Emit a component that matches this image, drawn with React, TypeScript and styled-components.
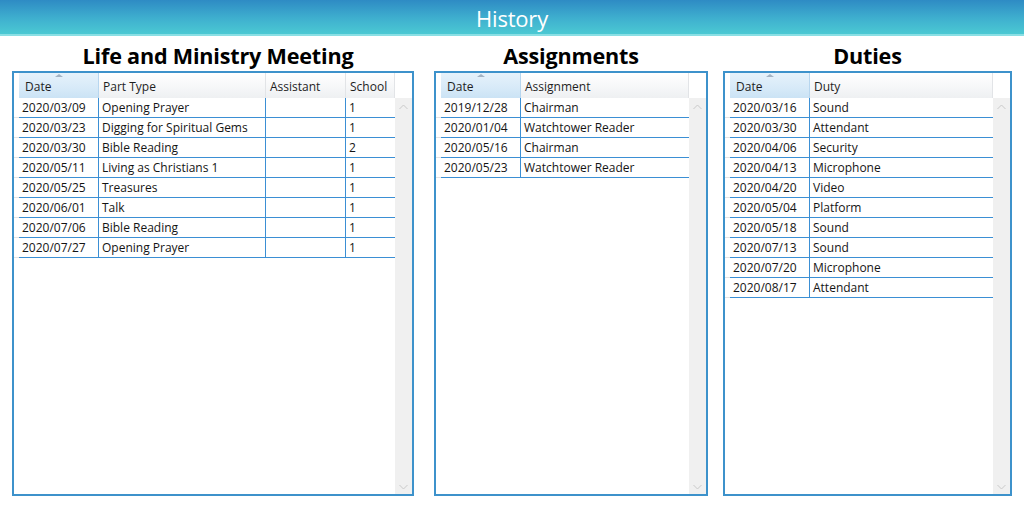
import React from "react";
import styled, { createGlobalStyle } from "styled-components";

const Global = createGlobalStyle`
  html, body { margin: 0; padding: 0; background: #ffffff; }
  body { font-family: "Open Sans", "Noto Sans", sans-serif; }
  * { box-sizing: border-box; }
`;

const Page = styled.div`
  width: 1024px;
  height: 506px;
  background: #fff;
  display: flex;
  flex-direction: column;
  overflow: hidden;
`;

const TopBar = styled.header`
  height: 36px;
  background: linear-gradient(#2e8bc4 0%, #3fb0cf 55%, #4bc9d3 100%);
  border-bottom: 2px solid #8adfe4;
  display: flex;
  align-items: center;
  justify-content: center;
  color: #fff;
  font-family: "Open Sans", sans-serif;
  font-size: 22px;
  letter-spacing: -0.2px;
  padding-top: 1px;
`;

const Columns = styled.main`
  display: flex;
  padding: 7px 12px 0 12px;
`;

const Section = styled.section<{ $w: number; $ml: number }>`
  width: ${(p) => p.$w}px;
  margin-left: ${(p) => p.$ml}px;
  display: flex;
  flex-direction: column;
`;

const SectionTitle = styled.h2<{ $shift?: number }>`
  margin: 0;
  height: 28px;
  line-height: 26px;
  text-align: center;
  padding-left: ${(p) => (p.$shift ?? 0) * 2}px;
  font-family: "Open Sans", sans-serif;
  font-weight: 700;
  font-size: 21.6px;
  letter-spacing: -0.2px;
  color: #000;
`;

const GridFrame = styled.div`
  height: 425px;
  border: 2px solid #3d92cb;
  display: flex;
  flex-direction: column;
  background: #fff;
`;

const HeaderRow = styled.div`
  height: 25px;
  display: flex;
  flex-shrink: 0;
`;

const Gutter = styled.div`
  width: 5px;
  flex-shrink: 0;
`;

const HeaderCell = styled.div<{ $w: number; $sorted?: boolean }>`
  position: relative;
  width: ${(p) => p.$w}px;
  flex-shrink: 0;
  height: 25px;
  padding-left: ${(p) => (p.$sorted ? 6 : 4)}px;
  padding-top: 1px;
  display: flex;
  align-items: center;
  font-size: 12px;
  color: #1e1e1e;
  background: ${(p) =>
    p.$sorted
      ? "linear-gradient(#e6f2fb 0%, #d7eaf8 60%, #cbe3f5 100%)"
      : "linear-gradient(#ffffff 0%, #f7f8f9 50%, #eef0f2 100%)"};
  border-right: 1px solid ${(p) => (p.$sorted ? "#b7d6ef" : "#e2e4e7")};
`;

const SortArrow = styled.span`
  position: absolute;
  top: 1px;
  left: 50%;
  margin-left: -4px;
  width: 0;
  height: 0;
  border-left: 4px solid transparent;
  border-right: 4px solid transparent;
  border-bottom: 3px solid #a3b3c3;
`;

const Body = styled.div`
  flex: 1;
  display: flex;
  min-height: 0;
`;

const RowsArea = styled.div`
  flex: 1;
  display: flex;
  flex-direction: column;
`;

const Row = styled.div`
  display: flex;
  height: 20px;
`;

const RowGutter = styled.div`
  width: 5px;
  flex-shrink: 0;
  border-bottom: 1px solid #e4e4e4;
`;

const Cell = styled.div<{ $w: number }>`
  width: ${(p) => p.$w}px;
  flex-shrink: 0;
  height: 20px;
  padding-left: 3px;
  display: flex;
  align-items: center;
  font-size: 12px;
  color: #141414;
  white-space: nowrap;
  border-bottom: 1px solid #3b8fd4;
  border-right: 1px solid #3b8fd4;
  &:last-child {
    border-right: none;
  }
`;

const Scrollbar = styled.div`
  width: 17px;
  flex-shrink: 0;
  background: #f0f0f0;
  display: flex;
  flex-direction: column;
  justify-content: space-between;
  align-items: center;
  padding: 6px 0 4px;
`;

const Chevron = ({ up }: { up?: boolean }) => (
  <svg width="9" height="6" viewBox="0 0 9 6">
    <path
      d={up ? "M0.5 5 L4.5 1 L8.5 5" : "M0.5 1 L4.5 5 L8.5 1"}
      fill="none"
      stroke="#c9c9c9"
      strokeWidth="1"
    />
  </svg>
);

type Col = { title: string; w: number; sorted?: boolean };

const DataGrid = ({ cols, rows }: { cols: Col[]; rows: string[][] }) => (
  <GridFrame>
    <HeaderRow>
      <Gutter />
      {cols.map((c) => (
        <HeaderCell key={c.title} $w={c.w} $sorted={c.sorted}>
          {c.sorted && <SortArrow />}
          {c.title}
        </HeaderCell>
      ))}
    </HeaderRow>
    <Body>
      <RowsArea>
        {rows.map((r, i) => (
          <Row key={i}>
            <RowGutter />
            {r.map((v, j) => (
              <Cell key={j} $w={cols[j].w}>
                {v}
              </Cell>
            ))}
          </Row>
        ))}
      </RowsArea>
      <Scrollbar>
        <Chevron up />
        <Chevron />
      </Scrollbar>
    </Body>
  </GridFrame>
);

const lifeCols: Col[] = [
  { title: "Date", w: 80, sorted: true },
  { title: "Part Type", w: 167 },
  { title: "Assistant", w: 80 },
  { title: "School", w: 49 },
];
const lifeRows = [
  ["2020/03/09", "Opening Prayer", "", "1"],
  ["2020/03/23", "Digging for Spiritual Gems", "", "1"],
  ["2020/03/30", "Bible Reading", "", "2"],
  ["2020/05/11", "Living as Christians 1", "", "1"],
  ["2020/05/25", "Treasures", "", "1"],
  ["2020/06/01", "Talk", "", "1"],
  ["2020/07/06", "Bible Reading", "", "1"],
  ["2020/07/27", "Opening Prayer", "", "1"],
];

const assignCols: Col[] = [
  { title: "Date", w: 80, sorted: true },
  { title: "Assignment", w: 168 },
];
const assignRows = [
  ["2019/12/28", "Chairman"],
  ["2020/01/04", "Watchtower Reader"],
  ["2020/05/16", "Chairman"],
  ["2020/05/23", "Watchtower Reader"],
];

const dutyCols: Col[] = [
  { title: "Date", w: 80, sorted: true },
  { title: "Duty", w: 183 },
];
const dutyRows = [
  ["2020/03/16", "Sound"],
  ["2020/03/30", "Attendant"],
  ["2020/04/06", "Security"],
  ["2020/04/13", "Microphone"],
  ["2020/04/20", "Video"],
  ["2020/05/04", "Platform"],
  ["2020/05/18", "Sound"],
  ["2020/07/13", "Sound"],
  ["2020/07/20", "Microphone"],
  ["2020/08/17", "Attendant"],
];

export default function App() {
  return (
    <Page>
      <Global />
      <TopBar>History</TopBar>
      <Columns>
        <Section $w={402} $ml={0}>
          <SectionTitle $shift={5}>Life and Ministry Meeting</SectionTitle>
          <DataGrid cols={lifeCols} rows={lifeRows} />
        </Section>
        <Section $w={274} $ml={20}>
          <SectionTitle>Assignments</SectionTitle>
          <DataGrid cols={assignCols} rows={assignRows} />
        </Section>
        <Section $w={289} $ml={15}>
          <SectionTitle $shift={-2}>Duties</SectionTitle>
          <DataGrid cols={dutyCols} rows={dutyRows} />
        </Section>
      </Columns>
    </Page>
  );
}
